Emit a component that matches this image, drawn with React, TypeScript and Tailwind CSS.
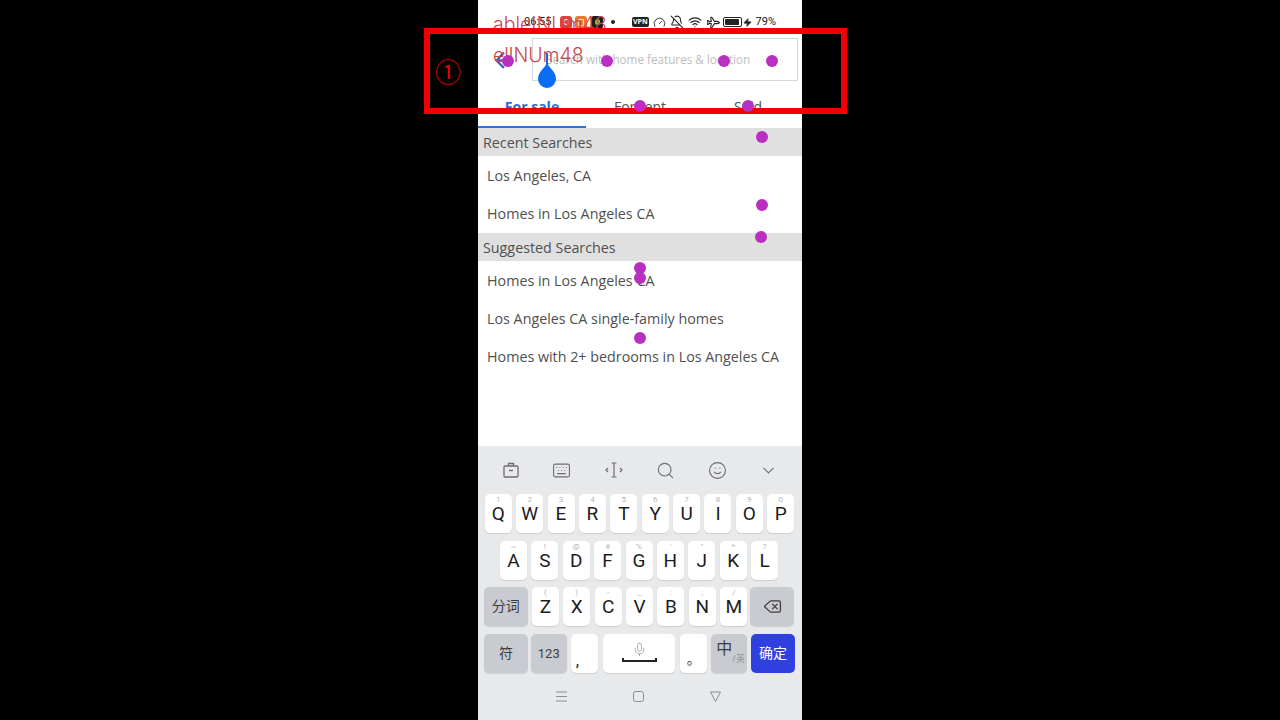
import { ChevronDown, Keyboard, Mic, Search, Smile, Plane, BellOff, Wifi, Zap, Gauge, Delete } from "lucide-react"

const sans = "font-['Open_Sans',sans-serif]"
const keyFont = "font-['Roboto','Noto_Sans_CJK_SC',sans-serif]"

const row1 = [
   ["Q", "1"], ["W", "2"], ["E", "3"], ["R", "4"], ["T", "5"],
   ["Y", "6"], ["U", "7"], ["I", "8"], ["O", "9"], ["P", "0"],
]
const row2 = [
   ["A", "~"], ["S", "!"], ["D", "@"], ["F", "#"], ["G", "%"],
   ["H", "'"], ["J", "\""], ["K", "*"], ["L", "?"],
]
const row3 = [
   ["Z", "("], ["X", ")"], ["C", "-"], ["V", "_"],
   ["B", ":"], ["N", ";"], ["M", "/"],
]

const dots = [
   "left-[502px] top-[55px]", "left-[601px] top-[55px]", "left-[718px] top-[55px]", "left-[766px] top-[55px]",
   "left-[634px] top-[100px]", "left-[742px] top-[100px]", "left-[756px] top-[131px]", "left-[756px] top-[199px]",
   "left-[755px] top-[231px]", "left-[634px] top-[262px]", "left-[634px] top-[272px]", "left-[634px] top-[332px]",
]

const LetterKey = ({ label, hint }: { label: string; hint: string }) => (
   <div className="relative flex h-[39px] w-[27px] items-center justify-center rounded-[5px] bg-white shadow-[0_1px_1px_rgba(0,0,0,0.12)]">
      <span className="absolute top-[1px] text-[8px] leading-[10px] text-[#b4b6ba]">{hint}</span>
      <span className="text-[19px] leading-none text-[#1c1c1e]">{label}</span>
   </div>
)

const GrayKey = ({ children, width }: { children: React.ReactNode; width: string }) => (
   <div className={`flex h-[39px] items-center justify-center rounded-[5px] bg-[#c9cbd0] text-[#3c3d40] shadow-[0_1px_1px_rgba(0,0,0,0.12)] ${width}`}>
      {children}
   </div>
)

const SectionHeader = ({ title }: { title: string }) => (
   <div className="flex h-[28px] items-center bg-[#e0e0e0] pl-[5px] pt-[2px] text-[14.3px] text-[#505050]">{title}</div>
)

const SearchRow = ({ title }: { title: string }) => (
   <div className="flex h-[38px] items-center pl-[9px] pt-[2px] text-[14.3px] text-[#505050]">{title}</div>
)

const App = () => {
   return (
      <div className={`relative flex h-[720px] w-[1280px] justify-center overflow-hidden bg-black ${sans}`}>
         <div className="flex h-[720px] w-[324px] flex-col bg-white">
            {/* status bar */}
            <div className="flex h-[38px] items-start justify-between pl-[46px] pr-[26px] pt-[15px] text-[11px] leading-[14px] text-[#222]">
               <div className="flex items-center">
                  <span className={`${keyFont} w-[36px] text-[#222]`}>06:55</span>
                  <span className="flex h-[13px] w-[12px] items-center justify-center rounded-[3px] bg-[#e2403a]">
                     <span className="h-[6px] w-[6px] rounded-full border border-white" />
                  </span>
                  <span className="ml-[3px] flex h-[13px] w-[12px] items-center justify-center rounded-[3px] bg-[#e8792f]">
                     <span className="h-[7px] w-[6px] rounded-[1px] border border-[#fbe0c8]" />
                  </span>
                  <span className="ml-[4px] flex h-[13px] w-[12px] items-center justify-center rounded-[3px] bg-[#1d1d1d]">
                     <span className="h-[6px] w-[5px] rounded-full bg-[#7ec83c]" />
                  </span>
                  <span className="ml-[8px] h-[4px] w-[4px] rounded-full bg-[#222]" />
               </div>
               <div className="flex items-center gap-[4px]">
                  <span className="rounded-[2px] bg-[#222] px-[1px] text-[7px] font-bold leading-[10px] text-white">VPN</span>
                  <Gauge size={13} strokeWidth={1.6} />
                  <BellOff size={14} strokeWidth={1.8} />
                  <Wifi size={14} strokeWidth={2} />
                  <Plane size={13} strokeWidth={2} className="rotate-45" />
                  <span className="flex items-center">
                     <span className="h-[10px] w-[19px] rounded-[2px] border border-[#222] p-[1px]">
                        <span className="block h-full w-[14px] rounded-[1px] bg-[#222]" />
                     </span>
                     <Zap size={9} fill="#222" className="ml-[1px]" />
                  </span>
                  <span className={`${keyFont}`}>79%</span>
               </div>
            </div>

            {/* search */}
            <div className="flex h-[43px] items-center">
               <div className="flex w-[54px] pl-[16px]">
                  <svg width="20" height="20" viewBox="0 0 20 20" fill="none" stroke="#3f5fc4" strokeWidth="2.4">
                     <path d="M10 2.5L2.5 10.5l7.5 7.5M3 10.5h15" />
                  </svg>
               </div>
               <div className="flex h-[43px] w-[266px] items-center border border-[#d4d7db] pl-[13px] text-[11.7px] text-[#bdbdbd]">
                  Search with home features &amp; location
               </div>
            </div>

            {/* tabs */}
            <div className="flex h-[47px] text-[14px] text-[#505050]">
               <div className="flex w-[108px] items-start justify-center border-b-2 border-[#2a74d6] pt-[15px] font-bold text-[#1b6fdc]">For sale</div>
               <div className="flex w-[108px] items-start justify-center pt-[15px]">For rent</div>
               <div className="flex w-[108px] items-start justify-center pt-[15px]">Sold</div>
            </div>

            <SectionHeader title="Recent Searches" />
            <div className="pb-[1px]">
               <SearchRow title="Los Angeles, CA" />
               <SearchRow title="Homes in Los Angeles CA" />
            </div>
            <SectionHeader title="Suggested Searches" />
            <div>
               <SearchRow title="Homes in Los Angeles CA" />
               <SearchRow title="Los Angeles CA single-family homes" />
               <SearchRow title="Homes with 2+ bedrooms in Los Angeles CA" />
            </div>

            {/* keyboard */}
            <div className={`mt-auto flex h-[274px] flex-col bg-[#e8e9eb] ${keyFont}`}>
               <div className="flex h-[48px] items-center justify-between pl-[24px] pr-[24px] text-[#6d6e72]">
                  <svg width="18" height="18" viewBox="0 0 18 18" fill="none" stroke="currentColor" strokeWidth="1.3">
                     <rect x="2" y="5" width="14" height="11" rx="1" />
                     <path d="M6.5 5V2.5h5V5M7 9.5h4" />
                  </svg>
                  <Keyboard size={19} strokeWidth={1.4} />
                  <svg width="20" height="18" viewBox="0 0 20 18" fill="none" stroke="currentColor" strokeWidth="1.2">
                     <path d="M7.5 2h5M7.5 16h5M10 2v14M4 7l-2 2 2 2M16 7l2 2-2 2" />
                  </svg>
                  <Search size={19} strokeWidth={1.4} />
                  <Smile size={19} strokeWidth={1.4} />
                  <ChevronDown size={19} strokeWidth={1.4} />
               </div>

               <div className="flex justify-center gap-[4.4px] pr-[1px]">
                  {row1.map(([label, hint]) => <LetterKey key={label} label={label} hint={hint} />)}
               </div>
               <div className="mt-[8px] flex justify-center gap-[4.4px] pr-[2px]">
                  {row2.map(([label, hint]) => <LetterKey key={label} label={label} hint={hint} />)}
               </div>
               <div className="mt-[7px] flex justify-center gap-[4.4px] pl-[6px] pr-[7px]">
                  <GrayKey width="w-[44px] ml-[-1px] mr-[-0.4px]"><span className="text-[14px]">分词</span></GrayKey>
                  {row3.map(([label, hint]) => <LetterKey key={label} label={label} hint={hint} />)}
                  <GrayKey width="w-[44px] ml-[-1.4px]"><Delete size={19} strokeWidth={1.6} /></GrayKey>
               </div>
               <div className="mt-[8px] flex justify-center gap-[4px] pl-[6px] pr-[7px]">
                  <GrayKey width="w-[44px] mr-[-1px]"><span className="text-[14px]">符</span></GrayKey>
                  <GrayKey width="w-[36px]"><span className="text-[13px]">123</span></GrayKey>
                  <div className="flex h-[39px] w-[27px] items-end justify-start rounded-[5px] bg-white pb-[5px] pl-[5px] text-[14px] font-bold leading-none text-[#333] shadow-[0_1px_1px_rgba(0,0,0,0.12)]">,</div>
                  <div className="ml-[1px] flex h-[39px] w-[73px] flex-col items-center rounded-[5px] bg-white pt-[8px] text-[#a3a5aa] shadow-[0_1px_1px_rgba(0,0,0,0.12)]">
                     <Mic size={15} strokeWidth={1.4} />
                     <span className="mt-[1px] h-[4px] w-[35px] border-x-2 border-b-2 border-[#222]" />
                  </div>
                  <div className="ml-[1px] flex h-[39px] w-[27px] items-end justify-center rounded-[5px] bg-white pb-[7px] text-[14px] leading-none text-[#333] shadow-[0_1px_1px_rgba(0,0,0,0.12)]">。</div>
                  <GrayKey width="w-[36px]">
                     <span className="mb-[9px] ml-[3px] text-[16px] leading-none">中</span>
                     <span className="mt-[12px] text-[9px] leading-none text-[#8d8f94]">/英</span>
                  </GrayKey>
                  <div className="flex h-[39px] w-[44px] items-center justify-center rounded-[5px] bg-[#2f3fe0] text-[14px] text-white">确定</div>
               </div>

               <div className="mt-auto flex h-[46px] items-center justify-center gap-[64px] pb-[1px] pr-[4px] text-[#8c8d91]">
                  <svg width="13" height="13" viewBox="0 0 13 13" fill="none" stroke="currentColor" strokeWidth="1">
                     <path d="M1 2h11M1 6.5h11M1 11h11" />
                  </svg>
                  <svg width="13" height="13" viewBox="0 0 13 13" fill="none" stroke="currentColor" strokeWidth="1">
                     <rect x="1.5" y="1.5" width="10" height="10" rx="2" />
                  </svg>
                  <svg width="13" height="13" viewBox="0 0 13 13" fill="none" stroke="currentColor" strokeWidth="1">
                     <path d="M1.5 2h10L6.5 11.5z" />
                  </svg>
               </div>
            </div>
         </div>

         {/* annotation overlay */}
         <span className="absolute left-[493px] top-[12px] font-['Inter',sans-serif] text-[19.5px] font-light leading-[24px] text-[#c8474c]">ableINUm48</span>
         <div className="absolute left-[424px] top-[28px] h-[86px] w-[423px] border-[6px] border-[#f00000]" />
         <span className="absolute left-[435px] top-[55px] font-['Noto_Sans_CJK_SC',sans-serif] text-[26px] leading-[32px] text-[#e80000]">①</span>
         <span className="absolute left-[493px] top-[43px] font-['Inter',sans-serif] text-[19.5px] font-light leading-[24px] text-[#c8474c]">ellNUm48</span>
         <svg className="absolute left-[537px] top-[52px]" width="20" height="38" viewBox="0 0 20 38">
            <path d="M9 1h2v11c0 3 8 7 8 15a9 9 0 0 1-18 0c0-8 8-12 8-15z" fill="#0a6cf5" />
         </svg>
         {dots.map((pos) => (
            <div key={pos} className={`absolute h-[12px] w-[12px] rounded-full bg-[#b92fbf] ${pos}`} />
         ))}
      </div>
   )
}

export default App
